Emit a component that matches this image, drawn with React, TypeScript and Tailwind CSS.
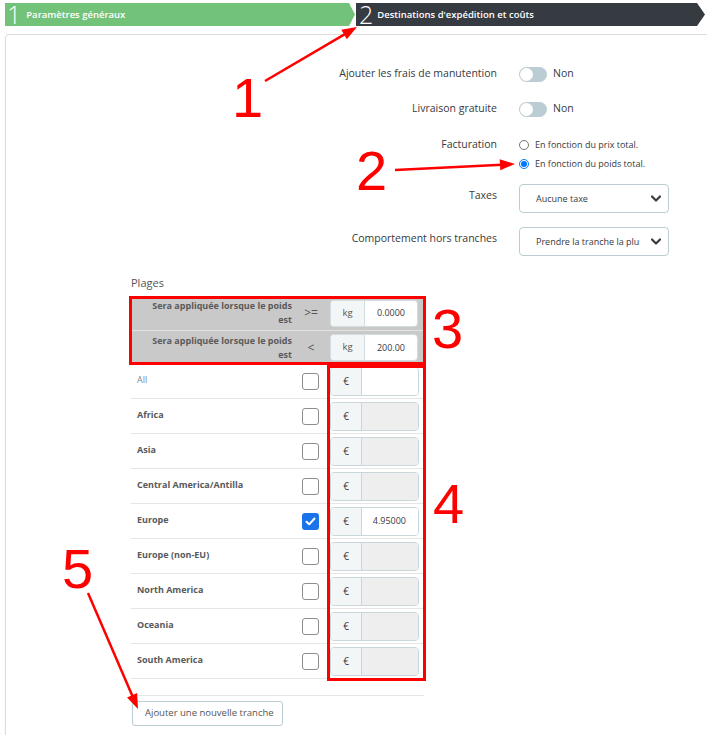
import React from 'react';

const RED = '#ff0000';

function Arrow({ x1, y1, x2, y2 }: { x1: number; y1: number; x2: number; y2: number }) {
  const dx = x2 - x1;
  const dy = y2 - y1;
  const len = Math.hypot(dx, dy);
  const ux = dx / len;
  const uy = dy / len;
  const hl = 15;
  const hw = 5.5;
  const bx = x2 - ux * hl;
  const by = y2 - uy * hl;
  const px = -uy;
  const py = ux;
  const pts = `${x2},${y2} ${bx + px * hw},${by + py * hw} ${bx - px * hw},${by - py * hw}`;
  return (
    <g>
      <line x1={x1} y1={y1} x2={bx + ux * 2} y2={by + uy * 2} stroke={RED} strokeWidth={2.5} />
      <polygon points={pts} fill={RED} />
    </g>
  );
}

function Toggle() {
  return (
    <div className="flex items-center">
      <div className="flex h-[15px] w-[28px] items-center rounded-full bg-[#bbcdd2] p-[1px]">
        <div className="h-[13px] w-[13px] rounded-full bg-white" />
      </div>
      <span className="ml-[6px] text-[10.5px] text-[#363a41]">Non</span>
    </div>
  );
}

function Radio({ checked, label }: { checked: boolean; label: string }) {
  return (
    <div className="flex h-[19px] items-center">
      {checked ? (
        <div className="flex h-[10px] w-[10px] items-center justify-center rounded-full border border-[#0075ff] bg-white">
          <div className="h-[6px] w-[6px] rounded-full bg-[#0075ff]" />
        </div>
      ) : (
        <div className="h-[10px] w-[10px] rounded-full border border-[#767676] bg-white" />
      )}
      <span className="ml-[6px] text-[9px] text-[#363a41]">{label}</span>
    </div>
  );
}

function Select({ text }: { text: string }) {
  return (
    <div className="flex h-[29px] w-[150px] items-center rounded-[4px] border border-[#bbcdd2] bg-white pl-[16px] pr-[6px]">
      <div className="w-[104px] overflow-hidden whitespace-nowrap text-[9px] text-[#363a41]">{text}</div>
      <div className="flex flex-1 justify-end pr-[1px]">
        <svg width="10" height="7" viewBox="0 0 10 7">
          <polyline points="1,1.5 5,5.5 9,1.5" fill="none" stroke="#363a41" strokeWidth="2.2" strokeLinecap="round" strokeLinejoin="round" />
        </svg>
      </div>
    </div>
  );
}

function HeaderRow({ op, val, h }: { op: string; val: string; h: string }) {
  return (
    <div className={`flex items-center ${h}`}>
      <div className="w-[161px] text-right text-[9px] font-bold leading-[14px] text-[#5a5a5a]">
        Sera appliquée lorsque le poids
        <br />
        est
      </div>
      <div className="w-[38px] text-center text-[12px] text-[#555]">{op}</div>
      <div className="flex h-[27px] w-[88px] overflow-hidden rounded-[4px] border border-[#d3dde0] bg-white">
        <div className="flex w-[34px] items-center justify-center border-r border-[#d3dde0] bg-[#f3f6f7] text-[9.5px] text-[#555]">
          kg
        </div>
        <div className="flex flex-1 items-center justify-end pr-[12px] text-[9px] text-[#363a41]">{val}</div>
      </div>
    </div>
  );
}

type Zone = { name: string; checked: boolean; value: string; enabled: boolean; light?: boolean };

const zones: Zone[] = [
  { name: 'All', checked: false, value: '', enabled: true, light: true },
  { name: 'Africa', checked: false, value: '', enabled: false },
  { name: 'Asia', checked: false, value: '', enabled: false },
  { name: 'Central America/Antilla', checked: false, value: '', enabled: false },
  { name: 'Europe', checked: true, value: '4.95000', enabled: true },
  { name: 'Europe (non-EU)', checked: false, value: '', enabled: false },
  { name: 'North America', checked: false, value: '', enabled: false },
  { name: 'Oceania', checked: false, value: '', enabled: false },
  { name: 'South America', checked: false, value: '', enabled: false },
];

function Checkbox({ checked }: { checked: boolean }) {
  if (checked) {
    return (
      <div className="flex h-[17px] w-[17px] items-center justify-center rounded-[3px] bg-[#1a73e8]">
        <svg width="11" height="9" viewBox="0 0 11 9">
          <polyline points="1.5,4.8 4.2,7.3 9.5,1.5" fill="none" stroke="white" strokeWidth="2" strokeLinecap="round" strokeLinejoin="round" />
        </svg>
      </div>
    );
  }
  return <div className="h-[17px] w-[17px] rounded-[3px] border border-[#8d8d8d] bg-white" />;
}

function ZoneRow({ z }: { z: Zone }) {
  return (
    <div className="flex h-[35px] items-center border-b border-[#e6e6e6]">
      <div
        className={`w-[171px] pb-[2px] pl-[6px] text-[9px] ${
          z.light ? 'font-normal text-[#7a8c92]' : 'font-bold text-[#58595b]'
        }`}
      >
        {z.name}
      </div>
      <Checkbox checked={z.checked} />
      <div className="ml-[11px] flex h-[29px] w-[89px] overflow-hidden rounded-[4px] border border-[#c9d6da]">
        <div className="flex w-[31px] items-center justify-center border-r border-[#c9d6da] bg-[#f3f6f7] text-[10px] text-[#363a41]">
          €
        </div>
        <div
          className={`flex flex-1 items-center justify-end pr-[12px] text-[9px] text-[#363a41] ${
            z.enabled ? 'bg-white' : 'bg-[#eeeeee]'
          }`}
        >
          {z.value}
        </div>
      </div>
    </div>
  );
}

export default function App() {
  return (
    <div className="relative h-[735px] w-[707px] overflow-hidden bg-white font-['Open_Sans',sans-serif] text-[#363a41]">
      {/* Steps bar */}
      <div className="flex h-[26px] pl-[5px] pt-[3px]">
        <div className="flex h-[23px] w-[350px] items-center bg-[#72c279] pl-[2px] text-white [clip-path:polygon(0_0,calc(100%-6px)_0,100%_50%,calc(100%-6px)_100%,0_100%)]">
          <span className="text-[25px] font-light leading-[23px]">1</span>
          <span className="ml-[5px] text-[9.5px] font-semibold leading-[23px]">Paramètres généraux</span>
        </div>
        <div className="ml-[1px] flex h-[23px] w-[349px] items-center bg-[#363a41] pl-[3px] text-white [clip-path:polygon(0_0,calc(100%-8px)_0,100%_50%,calc(100%-8px)_100%,0_100%)]">
          <span className="text-[25px] font-light leading-[23px]">2</span>
          <span className="ml-[4px] text-[9.5px] font-semibold leading-[23px]">Destinations d'expédition et coûts</span>
        </div>
      </div>

      {/* Panel */}
      <div className="ml-[5px] mt-[8px] h-[720px] w-[720px] rounded-tl-[4px] border border-[#dcdcdc] shadow-[0_1px_2px_rgba(0,0,0,0.06)]">
        <div className="mt-[25px] flex h-[28px] items-center">
          <div className="w-[491px] text-right text-[10.5px]">Ajouter les frais de manutention</div>
          <div className="ml-[22px]">
            <Toggle />
          </div>
        </div>
        <div className="mt-[7px] flex h-[28px] items-center">
          <div className="w-[491px] text-right text-[10.5px]">Livraison gratuite</div>
          <div className="ml-[22px]">
            <Toggle />
          </div>
        </div>
        <div className="mt-[12px] flex">
          <div className="flex h-[19px] w-[491px] items-center justify-end text-[10.5px]">Facturation</div>
          <div className="ml-[22px] flex flex-col">
            <Radio checked={false} label="En fonction du prix total." />
            <Radio checked={true} label="En fonction du poids total." />
          </div>
        </div>
        <div className="mt-[11px] flex">
          <div className="w-[491px] pt-[3px] text-right text-[10.5px] leading-[17px]">Taxes</div>
          <div className="ml-[22px]">
            <Select text="Aucune taxe" />
          </div>
        </div>
        <div className="mt-[14px] flex">
          <div className="w-[491px] pt-[3px] text-right text-[10.5px] leading-[17px]">Comportement hors tranches</div>
          <div className="ml-[22px]">
            <Select text="Prendre la tranche la plus haute" />
          </div>
        </div>

        <div className="ml-[125px] mt-[18px] text-[11px] leading-[17px] text-[#555]">Plages</div>

        <div className="ml-[125px] mt-[5px] w-[293px] bg-[#c9c9c9]">
          <HeaderRow op=">=" val="0.0000" h="h-[34px]" />
          <div className="h-px bg-[#e3e3e3]" />
          <HeaderRow op="<" val="200.00" h="h-[33px]" />
        </div>

        <div className="ml-[125px] w-[293px]">
          {zones.map((z) => (
            <ZoneRow key={z.name} z={z} />
          ))}
          <div className="h-[17px] border-b border-[#e6e6e6]" />
        </div>

        <div className="ml-[126px] mt-[5px] flex h-[25px] w-[151px] items-center rounded-[3px] border border-[#bbcdd2] bg-white pl-[12px] text-[9.5px] text-[#555]">
          Ajouter une nouvelle tranche
        </div>
      </div>

      {/* Annotations */}
      <div className="pointer-events-none absolute left-[129px] top-[296px] h-[69px] w-[297px] border-[3px] border-[#ff0000]" />
      <div className="pointer-events-none absolute left-[327px] top-[365px] h-[316px] w-[99px] border-[3px] border-[#ff0000]" />

      <svg className="pointer-events-none absolute left-0 top-0" width="707" height="735" viewBox="0 0 707 735">
        <Arrow x1={265} y1={81} x2={357} y2={27} />
        <Arrow x1={395} y1={170} x2={515} y2={164} />
        <Arrow x1={88} y1={593} x2={138} y2={709} />
      </svg>

      <div className="absolute left-[232px] top-[70px] font-['Liberation_Sans',Arial,sans-serif] text-[56px] leading-none text-[#ff0000]">1</div>
      <div className="absolute left-[356px] top-[143px] font-['Liberation_Sans',Arial,sans-serif] text-[56px] leading-none text-[#ff0000]">2</div>
      <div className="absolute left-[432px] top-[301px] font-['Liberation_Sans',Arial,sans-serif] text-[56px] leading-none text-[#ff0000]">3</div>
      <div className="absolute left-[433px] top-[476px] font-['Liberation_Sans',Arial,sans-serif] text-[56px] leading-none text-[#ff0000]">4</div>
      <div className="absolute left-[62px] top-[541px] font-['Liberation_Sans',Arial,sans-serif] text-[56px] leading-none text-[#ff0000]">5</div>
    </div>
  );
}
